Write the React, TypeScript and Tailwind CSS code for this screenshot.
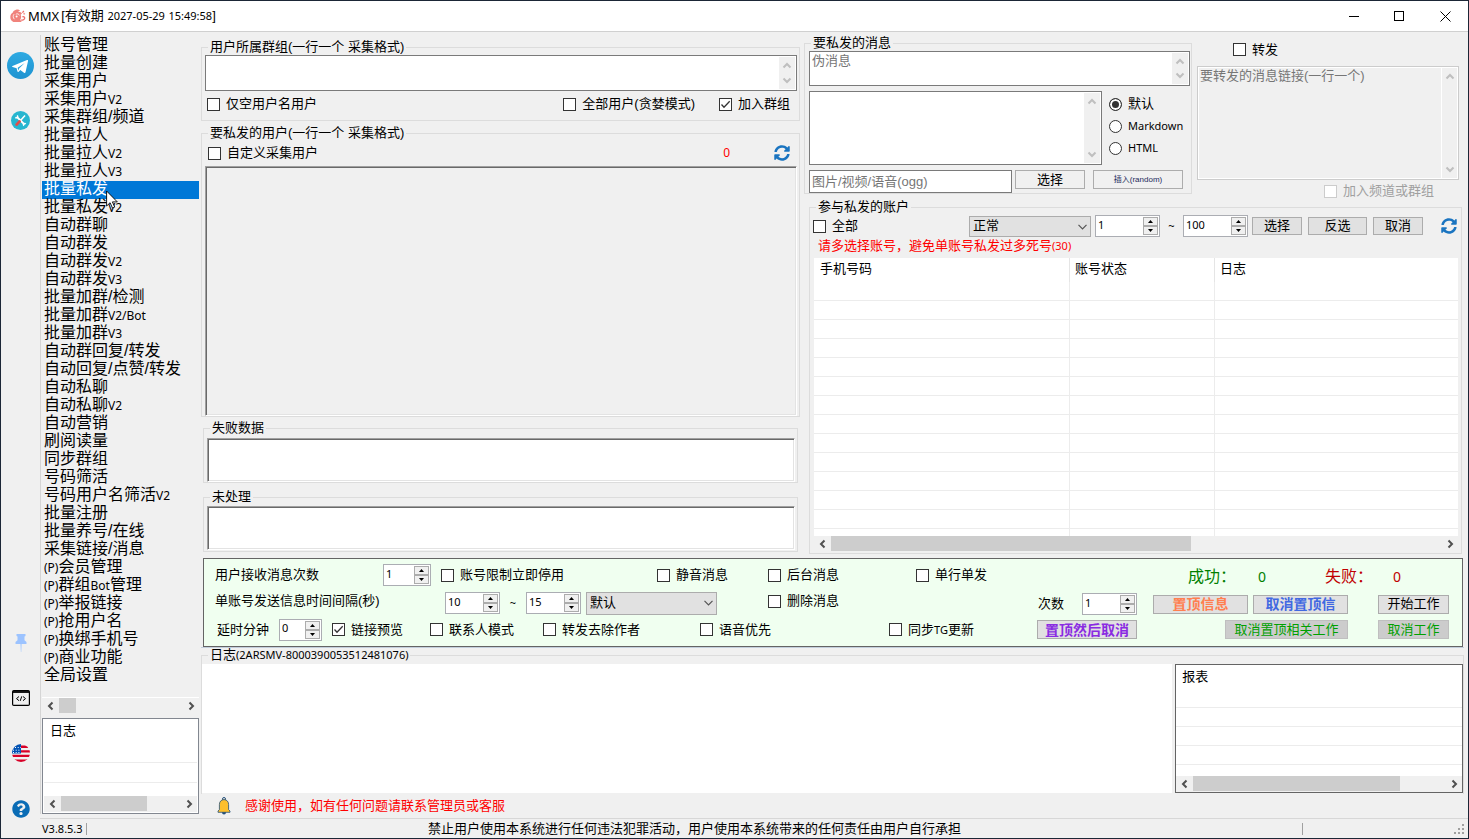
import React, { useState } from 'react';
import clsx from 'clsx';
import { FaSyncAlt, FaQuestionCircle } from 'react-icons/fa';

const MENU = [
  '账号管理', '批量创建', '采集用户', '采集用户V2', '采集群组/频道', '批量拉人',
  '批量拉人V2', '批量拉人V3', '批量私发', '批量私发V2', '自动群聊', '自动群发',
  '自动群发V2', '自动群发V3', '批量加群/检测', '批量加群V2/Bot', '批量加群V3',
  '自动群回复/转发', '自动回复/点赞/转发', '自动私聊', '自动私聊V2', '自动营销',
  '刷阅读量', '同步群组', '号码筛活', '号码用户名筛活V2', '批量注册', '批量养号/在线',
  '采集链接/消息', '(P)会员管理', '(P)群组Bot管理', '(P)举报链接', '(P)抢用户名',
  '(P)换绑手机号', '(P)商业功能', '全局设置',
];

const LATIN_RUN = /(\([A-Za-z0-9-]+\)|V2\/Bot|[A-Za-z0-9.:~-]+)/;

// Latin runs are set smaller than the Chinese text around them
function Mixed({ text, latin = 'text-[11px]' }: { text: string; latin?: string }) {
  return (
    <>
      {text.split(LATIN_RUN).map((part, i) =>
        i % 2 ? <span key={i} className={clsx("font-['Noto_Sans',sans-serif] leading-none", latin)}>{part}</span> : part
      )}
    </>
  );
}

function Chevron({ dir, className = '' }: { dir: 'up' | 'down' | 'left' | 'right'; className?: string }) {
  const paths = {
    up: 'M1.5 6.5 5 3l3.5 3.5',
    down: 'M1.5 3.5 5 7l3.5-3.5',
    left: 'M6.5 1.5 3 5l3.5 3.5',
    right: 'M3.5 1.5 7 5 3.5 8.5',
  };
  return (
    <svg viewBox="0 0 10 10" className={clsx('h-[10px] w-[10px]', className)} fill="none" stroke="currentColor" strokeWidth="2">
      <path d={paths[dir]} />
    </svg>
  );
}

type GroupProps = { title: string; className?: string; body?: string; children: React.ReactNode };

function Group({ title, className = '', body = '', children }: GroupProps) {
  return (
    <fieldset className={clsx('flex min-w-0 flex-col border border-[#dcdcdc]', className)}>
      <legend className="ml-1.5 h-[15px] px-0.5 leading-[13px] whitespace-nowrap"><Mixed text={title} /></legend>
      <div className={clsx('flex min-w-0 flex-1 flex-col', body)}>{children}</div>
    </fieldset>
  );
}

type CheckProps = { label: string; checked?: boolean; disabled?: boolean; className?: string };

function Check({ label, checked = false, disabled = false, className = '' }: CheckProps) {
  return (
    <label className={clsx('flex shrink-0 items-center gap-1.5 whitespace-nowrap', disabled && 'text-[#a0a0a0]', className)}>
      <span className="grid">
        <input
          type="checkbox"
          defaultChecked={checked}
          disabled={disabled}
          className="peer col-start-1 row-start-1 h-[13px] w-[13px] appearance-none border border-[#333] bg-white disabled:border-[#ccc]"
        />
        <svg viewBox="0 0 13 13" className="pointer-events-none invisible col-start-1 row-start-1 h-[13px] w-[13px] peer-checked:visible" fill="none" stroke="#333" strokeWidth="1.3">
          <path d="M2.5 6.5 5 9.2 10.7 3.3" />
        </svg>
      </span>
      <span className="leading-[18px]"><Mixed text={label} /></span>
    </label>
  );
}

function Radio({ label, checked = false }: { label: string; checked?: boolean }) {
  return (
    <label className="flex items-center gap-1.5">
      <input
        type="radio"
        name="format"
        defaultChecked={checked}
        className="h-[13px] w-[13px] appearance-none rounded-full border border-[#333] bg-white checked:bg-[#333] checked:shadow-[inset_0_0_0_2px_white]"
      />
      <span className="leading-[22px]"><Mixed text={label} /></span>
    </label>
  );
}

function Spin({ value, label, className = '' }: { value: number; label: string; className?: string }) {
  const [n, setN] = useState(value);
  const step = 'flex h-[9px] w-[15px] items-center justify-center border border-[#acacac] bg-[#f0f0f0]';
  return (
    <span className={clsx('flex h-[22px] shrink-0 border border-[#abadb3] bg-white', className)}>
      <input
        aria-label={label}
        value={n}
        onChange={(e) => setN(Number(e.target.value) || 0)}
        className="w-full min-w-0 flex-1 bg-transparent pb-[3px] pl-0.5 font-['Noto_Sans',sans-serif] text-[11px] outline-none"
      />
      <span className="mr-px flex flex-col justify-center">
        <button aria-label="+" onClick={() => setN(n + 1)} className={step}>
          <svg viewBox="0 0 5 3" className="h-[3px] w-[5px]"><path d="M0 3 2.5 0 5 3z" /></svg>
        </button>
        <button aria-label="-" onClick={() => setN(n - 1)} className={step}>
          <svg viewBox="0 0 5 3" className="h-[3px] w-[5px]"><path d="M0 0 2.5 3 5 0z" /></svg>
        </button>
      </span>
    </span>
  );
}

function Select({ value, label, className = '' }: { value: string; label: string; className?: string }) {
  return (
    <span className={clsx('relative shrink-0', className)}>
      <select aria-label={label} className="h-full w-full appearance-none border border-[#acacac] bg-[#e1e1e1] pl-[3px] outline-none">
        <option>{value}</option>
      </select>
      <svg viewBox="0 0 9 6" className="pointer-events-none absolute top-2 right-1 h-[6px] w-[9px]" fill="none" stroke="#555" strokeWidth="1.2">
        <path d="m.5.8 4 4 4-4" />
      </svg>
    </span>
  );
}

function Button({ children, className = '', disabled = false }: { children: React.ReactNode; className?: string; disabled?: boolean }) {
  return (
    <button
      disabled={disabled}
      className={clsx(
        'flex shrink-0 items-center justify-center border whitespace-nowrap',
        disabled ? 'border-[#bfbfbf] bg-[#ccc] text-[#00a000]' : 'border-[#acacac] bg-[#e1e1e1]',
        className
      )}
    >
      {children}
    </button>
  );
}

type MemoProps = { label: string; placeholder?: string; disabled?: boolean; className?: string };

function Memo({ label, placeholder, disabled = false, className = '' }: MemoProps) {
  return (
    <div className={clsx('flex border', disabled ? 'border-[#ccc] bg-[#f0f0f0] shadow-[inset_0_0_0_1px_white]' : 'border-[#7a7a7a] bg-white', className)}>
      <textarea
        aria-label={label}
        placeholder={placeholder}
        disabled={disabled}
        className="min-w-0 flex-1 resize-none overflow-hidden bg-transparent px-0.5 leading-[18px] outline-none placeholder:text-[#767676]"
      />
      <div className={clsx('my-px mr-px flex w-4 flex-col items-center justify-between bg-[#f0f0f0] py-1 text-[#bfbfbf]', disabled && 'border-l border-white')}>
        <Chevron dir="up" />
        <Chevron dir="down" />
      </div>
    </div>
  );
}

function Sunken({ label, className = '' }: { label: string; className?: string }) {
  return (
    <textarea
      aria-label={label}
      className={clsx(
        'w-full resize-none border border-t-[#a0a0a0] border-r-white border-b-white border-l-[#a0a0a0] p-1 outline-none shadow-[inset_1px_1px_0_#696969,inset_-1px_-1px_0_#e3e3e3]',
        className
      )}
    />
  );
}

function HScroll({ thumb }: { thumb: string }) {
  return (
    <div className="flex h-[16px] shrink-0 bg-[#f0f0f0] text-[#505050]">
      <span className="flex w-[17px] items-center justify-center"><Chevron dir="left" /></span>
      <span className="flex flex-1"><span className={clsx('h-[15px] bg-[#cdcdcd]', thumb)} /></span>
      <span className="flex w-[17px] items-center justify-center"><Chevron dir="right" /></span>
    </div>
  );
}

function LogoIcon() {
  return (
    <svg viewBox="0 0 16 14" className="h-[14px] w-4">
      <path fill="#f0837c" d="M6 .8C8 .2 9.600 1 10.200 2.200 9.200 1.900 8.400 2.200 8 2.800c1.800-.3 3.200.5 4 1.800L10.600 5.800c.9 1.700.7 3.500-.3 4.900l1.400 2.300H3.400C1.300 11.800.2 10 .3 7.900.4 5.600 1.600 4.300 2.800 3.600 3.200 2.200 4.400 1.200 6 .8z" />
      <path fill="none" stroke="#fff" strokeWidth=".8" d="M4 5.200c-1 1.200-1.200 3.600.4 5M5.800 5.300c1.400-1 3.200-.4 3.600 1.100" />
      <circle cx="6.600" cy="7.600" r="1" fill="#fff" />
      <path fill="none" stroke="#ee6f6a" strokeWidth="1.300" d="M11.200 10.800c2.100.8 3.900-.6 3.400-2.300-.4-1.200-1.700-1.200-2-.3M12.400 3.600l1.500-1.600" />
      <circle cx="14.200" cy="4.800" r="1" fill="#f5a39d" />
    </svg>
  );
}

function TelegramIcon() {
  return (
    <svg viewBox="0 0 27 27" className="h-[27px] w-[27px]">
      <defs>
        <linearGradient id="tg" x1="0" y1="0" x2="0" y2="1">
          <stop offset="0" stopColor="#2eaae2" />
          <stop offset="1" stopColor="#1f93d1" />
        </linearGradient>
      </defs>
      <circle cx="13.500" cy="13.500" r="13.500" fill="url(#tg)" />
      <path fill="#fff" d="M5.500 14 20 8.100c.8-.2 1.200.2 1 1.100l-2.500 11c-.2.800-.8 1-1.500.6l-3.700-2.700-1.900 1.800c-.4.3-.8.200-.9-.3l-.9-3.400-4-1.300c-.7-.3-.7-.7-.1-.9z" />
      <path fill="#2aa1da" d="m10.700 15.700 7-4.700-5.600 5.400-.9 2.400z" />
    </svg>
  );
}

function ToolsIcon() {
  return (
    <svg viewBox="0 0 19 19" className="h-[19px] w-[19px]">
      <circle cx="9.500" cy="9.500" r="9.500" fill="#27b6d0" />
      <path stroke="#fff" strokeWidth="1.800" d="m6 6 7.500 7.500" />
      <path fill="none" stroke="#fff" strokeWidth="1.500" d="M4.400 6.400c1.200 1.200 3-.6 1.900-2M12.800 14.800c-1-1.400.7-3 2-2" />
      <path stroke="#fff" strokeWidth="1.500" d="m9.500 9.500 4.500-5" />
      <path stroke="#e04f4b" strokeWidth="2.800" strokeLinecap="round" d="m5.600 13.600 3-3.200" />
    </svg>
  );
}

function PinIcon() {
  return (
    <svg viewBox="0 0 14 18" className="h-[18px] w-[14px]">
      <path fill="#9cc3ff" d="M2.500 0h9v2l-1 .6v3.600l2 1.800v2H1.500V8l2-1.800V2.600l-1-.6z" />
      <path fill="#b9d4fb" d="M6.200 10h1.700l-.5 8h-.6z" />
    </svg>
  );
}

function CodeIcon() {
  return (
    <svg viewBox="0 0 18 16" className="h-4 w-[18px]" fill="none" stroke="#000">
      <rect x=".6" y=".6" width="16.800" height="14.800" rx="1.200" strokeWidth="1.200" />
      <path strokeWidth="1.800" d="M1 2h16" />
      <path strokeWidth="1" d="M7 6.500 4.500 8.600 7 10.700M11 6.500l2.500 2.100-2.500 2.100M9.800 6.300l-1.600 4.600" />
    </svg>
  );
}

function FlagIcon() {
  return (
    <svg viewBox="0 0 18 18" className="h-[18px] w-[18px]">
      <clipPath id="flag"><circle cx="9" cy="9" r="9" /></clipPath>
      <g clipPath="url(#flag)">
        <path fill="#f0f0f0" d="M0 0h18v18H0z" />
        <path fill="#d80027" d="M9 1.500h9V4H9zM9 6.200h9v2.400H9zM0 10.800h18v2.300H0zM0 15.500h18V18H0z" />
        <path fill="#0052b4" d="M0 0h9v9.500H0z" />
        <path stroke="#fff" strokeWidth="1" strokeDasharray="1 1.700" d="M3 3.500h6M1 6.200h8M1 8.500h8" />
      </g>
    </svg>
  );
}

function BellIcon() {
  return (
    <svg viewBox="0 0 14 18" className="h-[18px] w-[14px]">
      <circle cx="7" cy="2" r="1.500" fill="none" stroke="#25507a" />
      <circle cx="7" cy="15.500" r="2" fill="#25507a" />
      <path fill="#fdbf2d" stroke="#25507a" strokeWidth=".8" d="M7 2.600c-3 0-4.600 2.300-4.600 5v5L1 14v1.300h12V14l-1.400-1.400v-5c0-2.700-1.600-5-4.600-5z" />
    </svg>
  );
}

function Cursor() {
  return (
    <svg viewBox="0 0 12 19" className="pointer-events-none absolute top-[9px] left-16 z-10 h-[19px] w-3">
      <path fill="#fff" stroke="#000" strokeWidth=".9" d="M.6 1v15l3.500-3.300 2.400 5.400 2.200-1-2.300-5.200h4.900z" />
    </svg>
  );
}

function TitleBar() {
  return (
    <header className="flex h-[31px] shrink-0 items-center border-b border-[#d0d0d0] bg-white pl-[9px]">
      <LogoIcon />
      <h1 className="ml-0.5 flex flex-1 items-center gap-0.5">
        <Mixed text="MMX" latin="text-[13px]" />
        <span><Mixed text="[有效期 2027-05-29 15:49:58]" /></span>
      </h1>
      <button aria-label="Minimize" className="flex h-full w-[45px] items-center justify-center">
        <span className="h-px w-[10px] bg-black" />
      </button>
      <button aria-label="Maximize" className="flex h-full w-[46px] items-center justify-center">
        <span className="h-[10px] w-[10px] border border-black" />
      </button>
      <button aria-label="Close" className="flex h-full w-[46px] items-center justify-center">
        <svg viewBox="0 0 11 11" className="h-[11px] w-[11px]" stroke="#000"><path d="m.5.5 10 10M10.500.5l-10 10" /></svg>
      </button>
    </header>
  );
}

function SideMenu() {
  const [active, setActive] = useState('批量私发');
  return (
    <aside className="mt-[3px] mb-1 flex w-[161px] shrink-0 flex-col border-l border-[#d5d5d5] pr-0.5 pl-px">
      <ul className="flex-1 pt-0.5 text-base">
        {MENU.map((item) => (
          <li key={item} className="relative">
            <button
              onClick={() => setActive(item)}
              className={clsx('block h-[18px] w-full pb-0.5 pl-0.5 text-left leading-[16px] whitespace-nowrap', item === active && 'bg-[#0078d7] text-white')}
            >
              <Mixed text={item} latin="text-xs" />
            </button>
            {item === '批量私发' && <Cursor />}
          </li>
        ))}
      </ul>
      <div className="border-t border-white">
        <HScroll thumb="w-[17px]" />
      </div>
      <div className="mt-1 flex h-[96px] flex-col border border-[#828790] bg-white">
        <table className="w-full flex-1 border-separate border-spacing-0 px-px">
          <thead>
            <tr><th className="h-6 pl-1.5 text-left align-middle font-normal">日志</th></tr>
          </thead>
          <tbody>
            <tr><td className="h-[20px] border-b border-[#ececec]" /></tr>
            <tr><td className="h-[19px] border-b border-[#ececec]" /></tr>
            <tr><td className="h-[13px]" /></tr>
          </tbody>
        </table>
        <div className="mx-px mb-px"><HScroll thumb="w-[72%]" /></div>
      </div>
    </aside>
  );
}

function UsersColumn() {
  return (
    <div className="flex min-w-0 flex-[599] flex-col pt-1 pb-1.5">
      <Group title="用户所属群组(一行一个 采集格式)" body="pr-0.5 pl-[3px]">
        <Memo label="用户所属群组" className="h-9" />
        <div className="flex h-[29px] items-center justify-between pr-[7px] pb-[3px] pl-0.5">
          <Check label="仅空用户名用户" />
          <div className="flex gap-6">
            <Check label="全部用户(贪婪模式)" />
            <Check label="加入群组" checked />
          </div>
        </div>
      </Group>
      <Group title="要私发的用户(一行一个 采集格式)" className="mt-[5px] flex-1" body="pr-0.5 pl-[3px]">
        <div className="flex h-[25px] items-center pr-[7px] pb-px pl-[3px]">
          <Check label="自定义采集用户" className="mr-auto" />
          <span className="font-['Noto_Sans',sans-serif] text-xs text-[#f00]">0</span>
          <button aria-label="刷新" className="ml-11 text-[#1a74c0]"><FaSyncAlt size={16} /></button>
        </div>
        <Sunken label="要私发的用户" className="flex-1 bg-[#f0f0f0]" />
      </Group>
      <Group title="失败数据" className="mx-0.5 mt-1" body="pt-0.5 pr-0.5 pl-[3px]">
        <Sunken label="失败数据" className="h-11 bg-white" />
      </Group>
      <Group title="未处理" className="mx-0.5 mt-[7px]" body="pt-px pr-0.5 pb-px pl-[3px]">
        <Sunken label="未处理" className="h-11 bg-white" />
      </Group>
    </div>
  );
}

function MessagePanel() {
  return (
    <div className="flex h-[164px] gap-[5px]">
      <Group title="要私发的消息" className="min-w-0 flex-[386] self-start" body="pr-px pl-1">
        <Memo label="伪消息" placeholder="伪消息" className="h-[35px]" />
        <div className="mt-[5px] flex">
          <Memo label="消息" className="h-[74px] flex-1" />
          <div className="w-[88px] pt-0.5 pl-[7px]">
            <Radio label="默认" checked />
            <Radio label="Markdown" />
            <Radio label="HTML" />
          </div>
        </div>
        <div className="mt-[5px] flex pr-[7px]">
          <input
            aria-label="图片/视频/语音"
            placeholder="图片/视频/语音(ogg)"
            className="h-[23px] min-w-0 flex-1 border border-[#7a7a7a] bg-white px-0.5 outline-none placeholder:text-[#767676]"
          />
          <Button className="ml-[3px] h-[19px] w-[70px] border-[#888] bg-[#f0f0f0]">选择</Button>
          <Button className="ml-2 h-[19px] w-[90px] border-[#888] bg-[#f0f0f0] text-[8px] text-[#1c2a5c]">插入(random)</Button>
        </div>
      </Group>
      <div className="flex min-w-0 flex-[262] flex-col pr-[5px]">
        <div className="flex h-[30px] items-center pb-[3px] pl-9"><Check label="转发" /></div>
        <Memo label="转发链接" placeholder="要转发的消息链接(一行一个)" disabled className="h-[114px]" />
        <div className="flex h-5 items-center justify-end pt-0.5 pr-[25px]"><Check label="加入频道或群组" disabled /></div>
      </div>
    </div>
  );
}

function AccountsPanel() {
  const line = 'border-b border-[#ececec]';
  return (
    <Group title="参与私发的账户" className="mr-0.5 ml-[5px] flex-1" body="pb-px pl-[3px]">
      <div className="flex h-[23px] items-center pr-1 pb-px">
        <Check label="全部" className="mr-auto" />
        <Select label="状态" value="正常" className="h-[21px] w-[122px]" />
        <Spin label="起始" value={1} className="ml-1 w-[65px]" />
        <span className="w-[23px] text-center"><Mixed text="~" /></span>
        <Spin label="结束" value={100} className="w-[65px]" />
        <Button className="ml-1 h-[18px] w-[50px]">选择</Button>
        <Button className="ml-1.5 h-[18px] w-[59px]">反选</Button>
        <Button className="ml-1.5 h-[18px] w-[50px]">取消</Button>
        <button aria-label="刷新" className="ml-[18px] text-[#1a74c0]"><FaSyncAlt size={16} /></button>
      </div>
      <p className="h-5 pl-[5px] leading-[15px] text-[#f00]"><Mixed text="请多选择账号，避免单账号私发过多死号(30)" /></p>
      <div className="mr-[3px] ml-px flex-1 bg-white">
        <table className="w-full table-fixed border-separate border-spacing-0">
          <colgroup>
            <col className="w-[256px]" />
            <col className="w-[145px]" />
            <col />
          </colgroup>
          <thead>
            <tr className="h-6 text-left">
              <th className="border-r border-[#e5e5e5] pb-0.5 pl-1.5 font-normal">手机号码</th>
              <th className="border-r border-[#e5e5e5] pb-0.5 pl-[5px] font-normal">账号状态</th>
              <th className="pb-0.5 pl-[5px] font-normal">日志</th>
            </tr>
          </thead>
          <tbody>
            {Array.from({ length: 13 }, (_, i) => (
              <tr key={i}>
                <td className={clsx('h-[19px] border-r', line)} />
                <td className={clsx('border-r', line)} />
                <td className={line} />
              </tr>
            ))}
            <tr>
              <td className="h-[7px] border-r border-[#ececec]" />
              <td className="border-r border-[#ececec]" />
              <td />
            </tr>
          </tbody>
        </table>
      </div>
      <div className="mr-[3px] ml-px"><HScroll thumb="w-[59%]" /></div>
    </Group>
  );
}

function OptionsPanel() {
  return (
    <section className="mr-px ml-0.5 flex justify-between border border-[#646464] bg-[#f0fff0] pt-0.5 pr-[13px] pb-1 pl-[11px]">
      <div>
        <div className="flex h-7 items-center">
          <span className="w-[168px]">用户接收消息次数</span>
          <Spin label="用户接收消息次数" value={1} className="w-12" />
          <Check label="账号限制立即停用" className="ml-[10px] w-[216px]" />
          <Check label="静音消息" className="w-[111px]" />
          <Check label="后台消息" className="w-[148px]" />
          <Check label="单行单发" />
        </div>
        <div className="flex h-7 items-center">
          <span className="w-[230px] pb-1">单账号发送信息时间间隔(秒)</span>
          <Spin label="最小间隔" value={10} className="w-[55px]" />
          <span className="w-[26px] text-center"><Mixed text="~" /></span>
          <Spin label="最大间隔" value={15} className="w-[55px]" />
          <Select label="模式" value="默认" className="ml-[5px] h-[23px] w-[131px]" />
          <Check label="删除消息" className="ml-[51px] pb-1" />
        </div>
        <div className="flex h-[25px] items-center">
          <span className="w-16 pl-0.5">延时分钟</span>
          <Spin label="延时分钟" value={0} className="w-[43px]" />
          <Check label="链接预览" checked className="ml-[10px] w-[98px]" />
          <Check label="联系人模式" className="w-[113px]" />
          <Check label="转发去除作者" className="w-[157px]" />
          <Check label="语音优先" className="w-[189px]" />
          <Check label="同步TG更新" />
        </div>
      </div>
      <div>
        <div className="flex h-[30px] items-center justify-end pt-0.5 text-base">
          <span className="w-[70px] text-[#008000]">成功：</span>
          <span className="w-[67px] text-[#008000]"><Mixed text="0" latin="text-sm" /></span>
          <span className="w-[68px] text-[#c00000]">失败：</span>
          <span className="w-14 text-[#c00000]"><Mixed text="0" latin="text-sm" /></span>
        </div>
        <div className="flex h-[26px] items-center">
          <span className="w-[45px] pl-px">次数</span>
          <Spin label="次数" value={1} className="w-[55px]" />
          <Button className="ml-4 h-[19px] w-[95px] text-sm font-bold text-[#ff7f50]">置顶信息</Button>
          <Button className="ml-[5px] h-[19px] w-[95px] text-sm font-bold text-[#4169e1]">取消置顶信</Button>
          <Button className="ml-[30px] h-[19px] w-[71px]">开始工作</Button>
        </div>
        <div className="flex h-[25px] items-center">
          <Button className="h-[19px] w-[100px] text-sm font-bold text-[#8a2be2]">置顶然后取消</Button>
          <Button disabled className="ml-[88px] h-[19px] w-[123px]">取消置顶相关工作</Button>
          <Button disabled className="ml-[30px] h-[19px] w-[71px]">取消工作</Button>
        </div>
      </div>
    </section>
  );
}

function LogPanel() {
  return (
    <>
      <Group title="日志(2ARSMV-8000390053512481076)" className="h-[146px] border-b-0" body="pt-px">
        <div className="flex flex-1 gap-[3px]">
          <textarea aria-label="日志" readOnly className="flex-[970] resize-none bg-white p-1 outline-none" />
          <div className="flex flex-[288] flex-col border border-[#646464] bg-white">
            <table className="w-full flex-1 border-separate border-spacing-0">
              <thead>
                <tr><th className="h-[23px] pl-1.5 text-left font-normal">报表</th></tr>
              </thead>
              <tbody>
                <tr><td className="h-5 border-b border-[#ececec]" /></tr>
                <tr><td className="h-[19px] border-b border-[#ececec]" /></tr>
                <tr><td className="h-[19px] border-b border-[#ececec]" /></tr>
                <tr><td className="h-[19px] border-b border-[#ececec]" /></tr>
                <tr><td className="h-[11px]" /></tr>
              </tbody>
            </table>
            <HScroll thumb="w-[82%]" />
          </div>
        </div>
      </Group>
      <div className="flex h-6 items-center gap-3.5 pb-px pl-4 text-[#f00]">
        <BellIcon />
        感谢使用，如有任何问题请联系管理员或客服
      </div>
    </>
  );
}

function StatusBar() {
  return (
    <footer className="flex h-5 items-center border-t border-[#d7d7d7] pl-0.5">
      <span className="w-11"><Mixed text="V3.8.5.3" /></span>
      <span className="h-3 w-px bg-[#a0a0a0]" />
      <span className="flex-1 text-center">禁止用户使用本系统进行任何违法犯罪活动，用户使用本系统带来的任何责任由用户自行承担</span>
      <span className="h-3 w-px bg-[#a0a0a0]" />
      <span className="flex w-[165px] justify-end pr-1">
        <svg viewBox="0 0 10 10" className="h-[10px] w-[10px]" fill="#a0a0a0">
          <path d="M8 0h2v2H8zM8 4h2v2H8zM4 4h2v2H4zM8 8h2v2H8zM4 8h2v2H4zM0 8h2v2H0z" />
        </svg>
      </span>
    </footer>
  );
}

export default function App() {
  return (
    <div className="flex min-h-screen flex-col border border-[#1b2636] bg-[#f0f0f0] font-['Liberation_Sans','Noto_Sans_CJK_SC',sans-serif] text-[13px] leading-[18px] text-black">
      <TitleBar />
      <div className="flex flex-1">
        <nav className="flex w-[39px] shrink-0 flex-col items-center justify-between pt-5 pb-5">
          <div className="flex flex-col items-center gap-8">
            <a href="#telegram" aria-label="Telegram"><TelegramIcon /></a>
            <a href="#tools" aria-label="Tools"><ToolsIcon /></a>
          </div>
          <div className="flex flex-col items-center gap-[38px]">
            <button aria-label="Pin"><PinIcon /></button>
            <button aria-label="Code"><CodeIcon /></button>
            <button aria-label="Language"><FlagIcon /></button>
            <button aria-label="Help" className="text-[#0a6cb5]"><FaQuestionCircle size={18} /></button>
          </div>
        </nav>
        <div className="flex min-w-0 flex-1 flex-col">
          <div className="flex flex-1">
            <SideMenu />
            <main className="flex min-w-0 flex-1 flex-col pt-1 pr-1">
              <div className="flex flex-1 gap-1">
                <UsersColumn />
                <div className="flex min-w-0 flex-[660] flex-col pb-1">
                  <MessagePanel />
                  <AccountsPanel />
                </div>
              </div>
              <OptionsPanel />
              <div className="h-px bg-[#c3cfdc]" />
              <LogPanel />
            </main>
          </div>
          <StatusBar />
        </div>
      </div>
    </div>
  );
}
